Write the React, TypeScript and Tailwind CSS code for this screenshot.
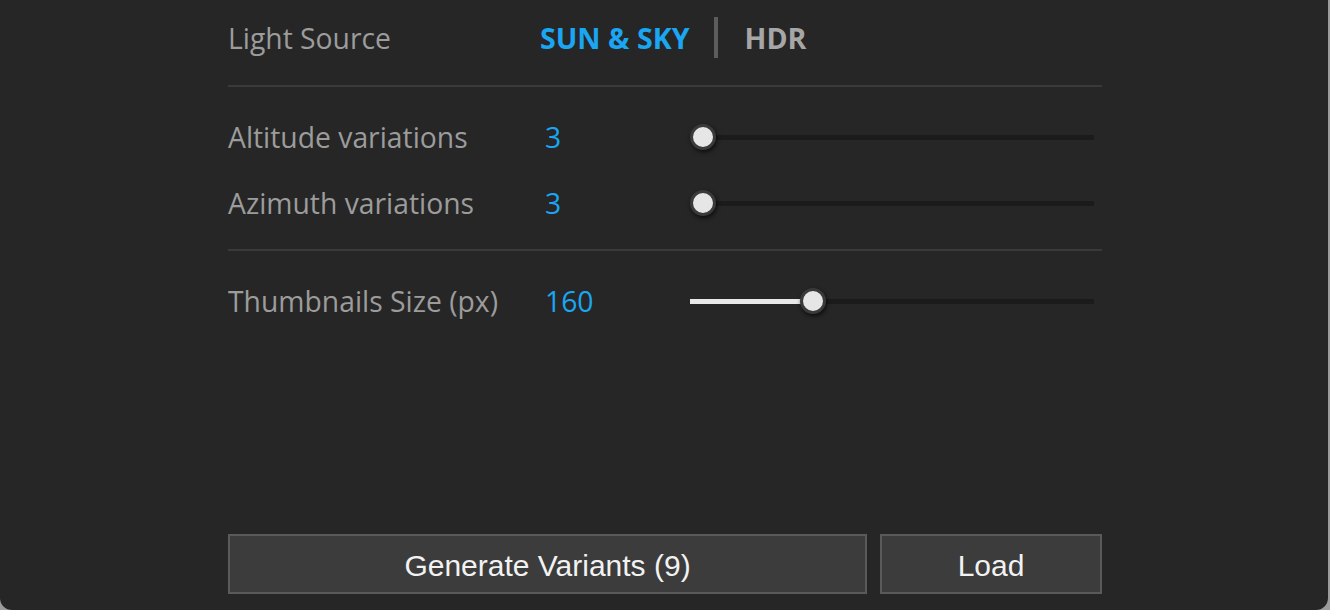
import React from 'react';

interface SliderRowProps {
  label: string;
  value: string;
  fill: number; // 0..1 position of the thumb
  filled?: boolean;
}

const SliderRow: React.FC<SliderRowProps> = ({ label, value, fill, filled }) => {
  return (
    <div className="flex h-[66px] items-center">
      <div className="w-[317px] text-[28.3px] text-[#9c9c9c]">{label}</div>
      <div className="w-[145px] text-[28.3px] text-[#1aa6f2]">{value}</div>
      <div className="relative h-[26px] w-[404px]">
        <div className="absolute left-0 right-0 top-[11px] h-[5px] bg-[#1b1b1b]" />
        {filled && (
          <div
            className="absolute left-0 top-[11px] h-[5px] bg-[#e8e8e8]"
            style={{ width: `calc(${fill * 100}% - ${fill * 26}px + 13px)` }}
          />
        )}
        <div
          className="absolute top-0 h-[26px] w-[26px] rounded-full border-[3px] border-[#3a3a3a] bg-[#e6e6e6] shadow-[1px_2px_4px_rgba(0,0,0,0.7)]"
          style={{ left: `calc(${fill * 100}% - ${fill * 26}px)` }}
        />
      </div>
    </div>
  );
};

export default function App() {
  return (
    <div className="h-[610px] w-[1330px] bg-[#9c9c9c] font-['Open_Sans',sans-serif]">
      <div className="flex h-[610px] w-[1328px] flex-col rounded-b-[12px] bg-[#262626]">
        <div className="ml-[228px] flex w-[874px] flex-1 flex-col pb-[16px]">
          {/* light source */}
          <div className="flex h-[76px] items-center">
            <div className="w-[312px] text-[28.3px] text-[#9c9c9c]">Light Source</div>
            <div className="flex items-center">
              <span className="text-[28.6px] font-bold text-[#1aa6f2]">SUN &amp; SKY</span>
              <span className="ml-[24px] h-[41px] w-[4px] bg-[#5c5c5c]" />
              <span className="ml-[27px] text-[28.6px] font-bold text-[#a6a6a6]">HDR</span>
            </div>
          </div>
          <div className="mt-[9px] h-[2px] bg-[#3a3a3a]" />

          <div className="mt-[17px]">
            <SliderRow label="Altitude variations" value="3" fill={0} />
            <SliderRow label="Azimuth variations" value="3" fill={0} />
          </div>
          <div className="mt-[13px] h-[2px] bg-[#3a3a3a]" />

          <div className="mt-[17px]">
            <SliderRow label="Thumbnails Size (px)" value="160" fill={0.29} filled />
          </div>

          <div className="mt-auto flex gap-[13px] font-['Liberation_Sans',Arial,sans-serif]">
            <button className="h-[60px] w-[639px] border-2 border-[#5a5a5a] bg-[#3c3c3c] pt-[3px] text-[30px] text-[#f2f2f2]">
              Generate Variants (9)
            </button>
            <button className="h-[60px] flex-1 border-2 border-[#5a5a5a] bg-[#3c3c3c] pt-[3px] text-[30px] text-[#f2f2f2]">
              Load
            </button>
          </div>
        </div>
      </div>
    </div>
  );
}
